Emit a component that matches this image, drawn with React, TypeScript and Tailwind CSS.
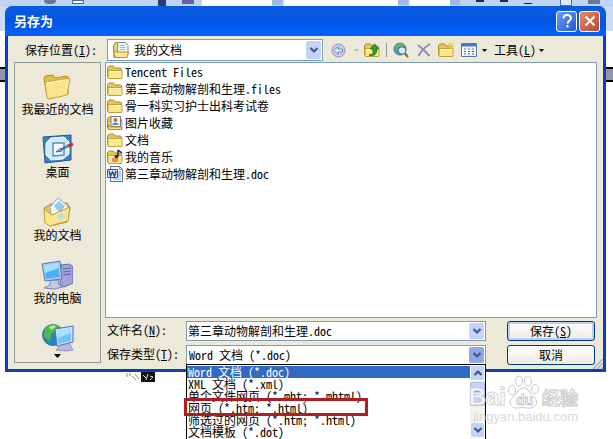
import type { ReactNode } from "react";

function Folder({ children }: { children?: ReactNode }) {
  return (
    <svg viewBox="0 0 16 16" className="size-4 shrink-0">
      <path d="M.5 13V3.500L2 2h4.500L8 4h5.500l1 1v9l-1 .5H2z" fill="#e9c552" stroke="#a98a2e" />
      <path d="M1 6.500h14V14l-.5.5H2l-1-.5z" fill="#fae88f" stroke="#c4a03a" />
      <path d="M2 7.500h12" stroke="#fff8cf" />
      {children}
    </svg>
  );
}

function PicturesIcon() {
  return (
    <Folder>
      <path d="M4 1.500h9.500v10H4z" fill="#f6fafc" stroke="#6b8191" />
      <circle cx="8.500" cy="5" r="2" fill="#d8643a" />
      <path d="M5 10c1-3.500 6-3.500 7 0z" fill="#5a8bbd" />
      <path d="M1.500 9.500l2 2.500h11v2.500H2z" fill="#fbe68b" stroke="#b98b22" />
    </Folder>
  );
}

function MusicIcon() {
  return (
    <Folder>
      <path d="M11 1v6M11 1l4 3" stroke="#1c2a3c" strokeWidth="1.500" />
      <ellipse cx="9.500" cy="7.500" rx="2" ry="1.500" fill="#1c2a3c" />
      <path d="M5 9h6v4H5z" fill="#e88a54" />
    </Folder>
  );
}

function WordIcon() {
  return (
    <svg viewBox="0 0 16 16" className="size-4 shrink-0">
      <path d="M3.500.5h9l3 3v12h-12z" fill="#fff" stroke="#4a6c9f" />
      <path d="M12.500.5v3h3M11 6h3M11 8h3M11 10h3M6 13h8" fill="none" stroke="#7c9bc9" />
      <path d="M.5 3.500h10v8H.5z" fill="#e2ecfa" stroke="#2c57a0" />
      <path d="M2 5l1.500 5L5.500 6l2 4L9 5" fill="none" stroke="#1c459b" strokeWidth="1.500" />
    </svg>
  );
}

function MyDocsIcon() {
  return (
    <svg viewBox="0 0 18 18" className="size-[18px] shrink-0">
      <path d="M1.500 5l2-3.500h5L10 4v11l-3 1.500H2z" fill="#f3d36a" stroke="#ab8429" />
      <path d="M5.500 1.500h8l2.500 3v9H5.500z" fill="#f2f8fd" stroke="#6d8fae" />
      <path d="M7.500 4.500h5M7.500 6.500h6M7.500 8.500h6" stroke="#98bddb" />
      <path d="M1.500 9l3 2h12L15 16.500H3z" fill="#fbe795" stroke="#b58c2c" />
    </svg>
  );
}

function BigFolder() {
  return (
    <svg viewBox="0 0 32 30" className="h-[30px] w-8">
      <path d="M3 8l1-3 8-1 2 3 12-2 2 2-1 16-19 5-2-3z" fill="#e7be4a" stroke="#b58b2c" />
      <path d="M4 11l24-4 1 2-3 15-18 4-2-1z" fill="#fbe58c" stroke="#cda341" />
      <path d="M6 12l20-3" stroke="#fff6c9" />
    </svg>
  );
}

function DesktopIcon() {
  return (
    <svg viewBox="0 0 32 30" className="h-[30px] w-8">
      <path d="M1 3l28-2v25L3 29z" fill="#3b83bd" stroke="#1f5c92" />
      <path d="M9 4l13-1 5 5v12l-6 5-12 1-5-5V9z" fill="#d5e9f8" stroke="#f2f9ff" />
      <path d="M11 9h11v12l-11 1z" fill="#f4faff" stroke="#5590bd" strokeWidth="1.500" />
      <path d="M18 16l8-4" stroke="#4179aa" strokeWidth="2.500" />
      <path d="M26 12l5-2" stroke="#b83b2c" strokeWidth="3" />
      <path d="M14 18l5-4 1 3z" fill="#8bb9dd" stroke="#3270a8" />
    </svg>
  );
}

function BigDocuments() {
  return (
    <svg viewBox="0 0 32 30" className="h-[30px] w-8">
      <path d="M3 11l7-4 16-1 3 5-3 14-17 4z" fill="#e8c457" stroke="#b68e30" />
      <path d="M9 10l8-9 10 8-5 13-11 2z" fill="#eff8ff" stroke="#84a9c8" />
      <path d="M13 9l5-5 6 5-5 7z" fill="#95c8ea" />
      <path d="M3 12l8 6 18-8-2 14-18 5-5-3z" fill="#fae68e" stroke="#c29a38" />
      <path d="M16 19l5-3 3 4-6 3z" fill="#b8dbe8" />
    </svg>
  );
}

function ComputerIcon() {
  return (
    <svg viewBox="0 0 32 30" className="h-[30px] w-8">
      <path d="M20 5l9-1 3 3v16l-9 4-4-3z" fill="#a4a4dd" stroke="#6566a8" />
      <path d="M22 9l8-1M22 12l8-1M22 15l8-1" stroke="#5d60ae" />
      <path d="M9 20h8l1 5 4 2-9 2-10-1 6-3z" fill="#c6cae9" stroke="#8085b9" />
      <path d="M1 4l18-3 2 18-17 2z" fill="#b9c9eb" stroke="#5c73b8" />
      <path d="M3 6l14-3 2 14-14 2z" fill="#4eb1f5" />
      <path d="M3 6l14-3 1 5-14 5z" fill="#a7e2fc" />
    </svg>
  );
}

function NetworkIcon() {
  return (
    <svg viewBox="0 0 32 30" className="h-[30px] w-8">
      <circle cx="11" cy="12" r="10.500" fill="#2586bf" stroke="#2a79ab" />
      <path d="M3 6c3-5 10-6 14-3l-4 6-4 2-1 7-5-3c-2-3-1-5 0-7z" fill="#51b948" />
      <path d="M7 4l5-2 2 2-5 3z" fill="#b0e79b" />
      <path d="M20 20h7l4 7-7 1-10-1z" fill="#b9b8dc" stroke="#9493c3" />
      <path d="M13 6l18-3v16l-16 4z" fill="#d2e5fa" stroke="#4d6cae" />
      <path d="M15 8l14-3v13l-13 3z" fill="#71c5f5" />
      <path d="M15 8l14-3v5l-13 5z" fill="#a8e1fb" />
    </svg>
  );
}

function Chevron({ up = false }: { up?: boolean }) {
  return (
    <svg viewBox="0 0 10 8" className="h-2 w-2.5">
      <path d={up ? "M1.500 6L5 2.500 8.500 6" : "M1.500 2L5 5.500 8.500 2"} fill="none" stroke="#41597f" strokeWidth="2.200" />
    </svg>
  );
}

function Caret({ className = "text-black" }: { className?: string }) {
  return (
    <svg viewBox="0 0 5 3" className={`h-[3px] w-[5px] ${className}`}>
      <path d="M0 0h5L2.500 3z" fill="currentColor" />
    </svg>
  );
}

function ComboArrow({ dark = false }: { dark?: boolean }) {
  return (
    <span
      className={`pointer-events-none absolute inset-y-px right-px flex w-[15px] items-center justify-center rounded-xs ${
        dark ? "bg-[#8fa6e8]" : "bg-[#c3d3fb]"
      }`}
    >
      <Chevron />
    </span>
  );
}

const places = [
  { name: "我最近的文档", icon: <BigFolder /> },
  { name: "桌面", icon: <DesktopIcon /> },
  { name: "我的文档", icon: <BigDocuments /> },
  { name: "我的电脑", icon: <ComputerIcon /> },
];

const files = [
  { name: "Tencent Files", icon: <Folder /> },
  { name: "第三章动物解剖和生理.files", icon: <Folder /> },
  { name: "骨一科实习护士出科考试卷", icon: <Folder /> },
  { name: "图片收藏", icon: <PicturesIcon /> },
  { name: "文档", icon: <Folder /> },
  { name: "我的音乐", icon: <MusicIcon /> },
  { name: "第三章动物解剖和生理.doc", icon: <WordIcon /> },
];

const types = [
  "Word 文档 (*.doc)",
  "XML 文档 (*.xml)",
  "单个文件网页 (*.mht; *.mhtml)",
  "网页 (*.htm; *.html)",
  "筛选过的网页 (*.htm; *.html)",
  "文档模板 (*.dot)",
];

function TitleBar() {
  return (
    <header className="flex h-[30px] items-center gap-[2px] rounded-t-lg bg-linear-to-b from-[#0a5be0] via-[#0455e4] to-[#0263fb] pr-[6px] pl-[9px]">
      <h1 className="flex-1 text-[13px] font-bold text-white">另存为</h1>
      <button aria-label="帮助" className="flex size-[21px] items-center justify-center rounded-[3px] border border-white bg-linear-to-br from-[#6d9cf5] to-[#2257d5]">
        <svg viewBox="0 0 16 16" className="size-4">
          <path d="M4.500 5.500C4.500 1 12 1 12 5.300c0 2.700-3.500 2.700-3.500 5.200M8.500 12v2.500" fill="none" stroke="#fff" strokeWidth="2" />
        </svg>
      </button>
      <button aria-label="关闭" className="flex size-[21px] items-center justify-center rounded-[3px] border border-white bg-linear-to-br from-[#e08a72] to-[#c04428]">
        <svg viewBox="0 0 16 16" className="size-4">
          <path d="M3.500 3.500l9 9M12.500 3.500l-9 9" stroke="#fff" strokeWidth="2" />
        </svg>
      </button>
    </header>
  );
}

function LookIn() {
  return (
    <div className="flex h-[22px] items-center">
      <label htmlFor="look-in" className="w-[93px] pl-[11px]">
        保存位置(<u>I</u>):
      </label>
      <div className="relative flex h-[22px] w-[216px] items-center border border-[#7f9db9] bg-white pl-1">
        <MyDocsIcon />
        <select id="look-in" className="h-full flex-1 appearance-none pl-1 outline-none">
          <option>我的文档</option>
        </select>
        <ComboArrow />
      </div>
      <div className="flex items-center pl-2">
        <button aria-label="后退" className="flex items-center gap-2">
          <svg viewBox="0 0 15 15" className="size-[15px]">
            <circle cx="7.500" cy="7.500" r="6.500" fill="#c6d1e9" stroke="#8496c4" />
            <path d="M3 7.500l4-4v2.500h4.500v3H7v2.500z" fill="#eef3fc" stroke="#6d82b8" />
          </svg>
          <Caret className="text-[#c7b9ae]" />
        </button>
        <button aria-label="向上一级" className="ml-[5px]">
          <Folder>
            <path d="M5 13c5 0 4-2 4-6H6.500L10.500 2l4 5h-2c0 6-2 7-7.500 6z" fill="#37a52f" stroke="#16701d" />
          </Folder>
        </button>
        <span className="mx-[6px] h-3.5 w-px bg-[#8d99a8]" />
        <button aria-label="搜索 Web">
          <svg viewBox="0 0 16 16" className="size-4">
            <circle cx="7" cy="7" r="6" fill="#5695bd" stroke="#4c7798" />
            <path d="M2 5c2-5 8-4 9-1L7 6 4 9z" fill="#67b174" />
            <circle cx="9" cy="8.500" r="3.800" fill="#d7ecf6" stroke="#376b7c" />
            <path d="M12 11.500l3 3.500" stroke="#8b6438" strokeWidth="2.200" />
          </svg>
        </button>
        <button aria-label="删除" className="ml-2">
          <svg viewBox="0 0 14 14" className="size-3.5">
            <path d="M1 2c4 3 8 7 11.500 11M13 1C8 4 4 8 1.500 13" fill="none" stroke="#8790b9" strokeWidth="2" />
          </svg>
        </button>
        <button aria-label="新建文件夹" className="ml-[7px]">
          <Folder>
            <path d="M12.500 0v7M9 3.500h7M10 1l5 5M15 1l-5 5" stroke="#f5c833" />
          </Folder>
        </button>
        <button aria-label="视图" className="ml-[7px] flex items-center gap-[5px]">
          <svg viewBox="0 0 16 14" className="h-3.5 w-4">
            <path d="M.5.500h15v13H.5z" fill="#f4f8ff" stroke="#5279ba" />
            <path d="M1 2h14" stroke="#4777cb" strokeWidth="3" />
            <path d="M3 6h2M7 6h2M11 6h2M3 8.500h2M7 8.500h2M11 8.500h2M3 11h2M7 11h2M11 11h2" stroke="#526f9f" />
          </svg>
          <Caret />
        </button>
        <button className="ml-[7px] flex items-center gap-[3px] whitespace-nowrap">
          <span>
            工具(<u>L</u>)
          </span>
          <Caret />
        </button>
      </div>
    </div>
  );
}

function Places() {
  return (
    <nav className="mb-[2px] flex w-[87px] shrink-0 flex-col items-center gap-[18px] border border-[#919b9c] pt-2">
      {places.map((p) => (
        <button key={p.name} className="flex flex-col items-center leading-[15px]">
          {p.icon}
          {p.name}
        </button>
      ))}
      <button aria-label="网上邻居" className="flex flex-col items-center gap-px">
        <NetworkIcon />
        <svg viewBox="0 0 7 4" className="h-1 w-[7px]">
          <path d="M0 0h7L3.500 4z" />
        </svg>
      </button>
    </nav>
  );
}

function TypeMenu() {
  return (
    <div className="absolute top-full -right-px -left-px flex border border-b-0 border-black bg-white">
      <ul role="listbox" aria-label="保存类型" className="flex-1 pt-px pb-1 leading-3">
        {types.map((t, i) => (
          <li
            key={t}
            role="option"
            aria-selected={i === 0}
            className={`h-3 pl-px whitespace-pre ${i === 0 ? "bg-[#316ac5] text-white" : ""}`}
          >
            {t}
          </li>
        ))}
      </ul>
      <div className="flex w-[15px] flex-col gap-px bg-[#f3f3ee] pb-1">
        <button aria-label="向上滚动" className="flex h-4 items-center justify-center rounded-xs border border-white bg-[#c3d3fb]">
          <Chevron up />
        </button>
        <div className="flex h-6 flex-col items-center justify-center gap-px rounded-xs border border-[#a9bff0] bg-[#c3d3fb]">
          <span className="h-px w-2 bg-[#8ca4e0]" />
          <span className="h-px w-2 bg-[#eef4ff]" />
          <span className="h-px w-2 bg-[#8ca4e0]" />
          <span className="h-px w-2 bg-[#eef4ff]" />
        </div>
        <button aria-label="向下滚动" className="mt-auto flex h-4 items-center justify-center rounded-xs border border-white bg-[#c3d3fb]">
          <Chevron />
        </button>
      </div>
      <div className="absolute top-[33px] -left-[3px] h-[18px] w-[184px] border-[3px] border-[#ad1f23]" />
    </div>
  );
}

function Fields() {
  const button = "h-[20px] rounded-[3px] border border-[#003c74] bg-linear-to-b from-white to-[#eceae2]";
  return (
    <div className="flex gap-[21px] pt-[3px]">
      <div className="flex flex-1 flex-col gap-1">
        <div className="flex h-5 items-center">
          <label htmlFor="file-name" className="w-[81px] pb-[3px] pl-[2px]">
            文件名(<u>N</u>):
          </label>
          <div className="relative flex h-5 flex-1 border border-[#7f9db9] bg-white">
            <input id="file-name" defaultValue="第三章动物解剖和生理.doc" className="w-full pb-px pl-px outline-none" />
            <ComboArrow />
          </div>
        </div>
        <div className="flex h-5 items-center">
          <label htmlFor="file-type" className="w-[81px] pb-[3px] pl-[2px]">
            保存类型(<u>T</u>):
          </label>
          <div className="relative flex h-5 flex-1 border border-[#7f9db9] bg-white">
            <select id="file-type" className="w-full appearance-none pl-[2px] outline-none">
              <option>Word 文档 (*.doc)</option>
            </select>
            <ComboArrow dark />
            <TypeMenu />
          </div>
        </div>
      </div>
      <div className="mr-[2px] flex w-[88px] flex-col gap-1">
        <button className={`${button} shadow-[inset_0_0_0_2px_#b9cff3]`}>
          保存(<u>S</u>)
        </button>
        <button className={button}>取消</button>
      </div>
    </div>
  );
}

function Backdrop() {
  return (
    <div className="col-start-1 row-start-1 flex flex-col">
      <div className="flex h-[7px] items-start gap-2 bg-[#bfd3f4] pl-[44px]">
        <span className="h-1 w-3 rounded-b-sm bg-[#6b7690]" />
        <span className="ml-2 h-1 w-3 border border-[#54698f] bg-white" />
        <span className="ml-[66px] h-[6px] w-2 bg-[#27377d]" />
        <span className="ml-2 h-1 w-3 bg-[#6b62a5]" />
        <span className="-mr-2 h-[6px] w-[70px] bg-white" />
        <span className="h-[5px] w-2.5 bg-[#9db9e8]" />
        <span className="-mr-2 -ml-1.5 h-[6px] w-[114px] bg-white" />
        <span className="h-[5px] w-2.5 bg-[#9db9e8]" />
        <span className="-mr-2 -ml-1.5 h-[6px] w-10 bg-white" />
        <span className="h-[5px] w-2.5 bg-[#9db9e8]" />
        <span className="ml-2 h-0.5 w-2 bg-[#1c2b4c]" />
        <span className="ml-2 h-0.5 w-2 bg-[#1c2b4c]" />
        <span className="ml-2 h-1 w-2 border-b border-[#1c2b4c]" />
        <span className="ml-5 h-[6px] w-3 border border-t-0 border-[#54698f] bg-[#dfe8f8]" />
        <span className="ml-2 h-1 w-3 bg-[#6b7690]" />
      </div>
      <div className="h-6 bg-[#cddcf5]" />
      <div className="h-9 bg-white" />
      <div className="h-[15px] border-y-2 border-black bg-[#9097ac]" />
      <div className="flex-1 bg-white" />
    </div>
  );
}

function Watermark() {
  return (
    <div className="pointer-events-none absolute right-[35px] bottom-[14px] flex flex-col items-end text-[#d5d5d5] opacity-90">
      <div className="flex items-end gap-[2px] leading-6 font-bold">
        <span className="font-['Liberation_Sans',sans-serif] text-2xl leading-6 text-white [-webkit-text-stroke:1px_#cfcfcf]">Bai</span>
        <svg viewBox="0 0 32 34" className="h-[34px] w-8" fill="#fff" stroke="#c4c4c4">
          <ellipse cx="4" cy="15" rx="3.500" ry="4.500" />
          <ellipse cx="11" cy="6" rx="3.500" ry="5" />
          <ellipse cx="20" cy="6" rx="3.500" ry="5" />
          <ellipse cx="27" cy="14" rx="3.500" ry="4.500" />
          <path d="M16 13c5 0 5 5 9 8 6 5 4 12-3 12-4 0-8-1-12 0-7 1-11-6-5-11 5-4 5-9 11-9z" />
          <text x="8" y="30" fontSize="14" className="font-['Liberation_Sans',sans-serif]">du</text>
        </svg>
        <span className="text-lg leading-6 text-white [-webkit-text-stroke:1px_#c4c4c4]">经验</span>
      </div>
      <span className="font-['Liberation_Sans',sans-serif] text-[13px] leading-4">jingyan.baidu.com</span>
    </div>
  );
}

export default function App() {
  return (
    <div className="relative grid h-screen overflow-hidden font-['Noto_Sans_CJK_SC',sans-serif] text-xs text-black [font-feature-settings:'hwid','liga'_0]">
      <Backdrop />
      <div className="col-start-1 row-start-1 mt-[6px] mr-[7px] ml-[5px] flex flex-col">
        <section role="dialog" aria-label="另存为" className="relative rounded-t-lg bg-[#0a3fb5] pb-[3px]">
          <TitleBar />
          <div className="mx-[3px] flex flex-col bg-[#ece9d8] pt-[3px] pr-[6px] pl-[6px]">
            <LookIn />
            <div className="mt-px flex gap-1 pb-1">
              <Places />
              <div className="flex flex-1 flex-col">
                <ul className="h-[256px] border border-[#7f9db9] bg-white">
                  {files.map((f) => (
                    <li key={f.name} className="flex h-[17px] items-center gap-[2px] pl-px">
                      {f.icon}
                      {f.name}
                    </li>
                  ))}
                </ul>
                <Fields />
              </div>
            </div>
          </div>
          <svg viewBox="0 0 10 10" className="absolute right-[3px] bottom-[3px] size-2.5">
            <path d="M0 10L10 0M4 10l6-6M8 10l2-2" stroke="#a9b3bd" strokeWidth="1.500" />
          </svg>
        </section>
        <svg viewBox="0 0 30 10" className="ml-[121px] h-2.5 w-[30px]">
          <path d="M1 1v4M4 1v3M6 4l4 4M9 2l4 5" stroke="#8b8b8b" />
          <path d="M15 0h14v10H15z" fill="#111" />
          <path d="M17 3l3 3M22 2l-2 6M24 4l3 1-3 3" fill="none" stroke="#ddd" />
        </svg>
      </div>
      <Watermark />
    </div>
  );
}
